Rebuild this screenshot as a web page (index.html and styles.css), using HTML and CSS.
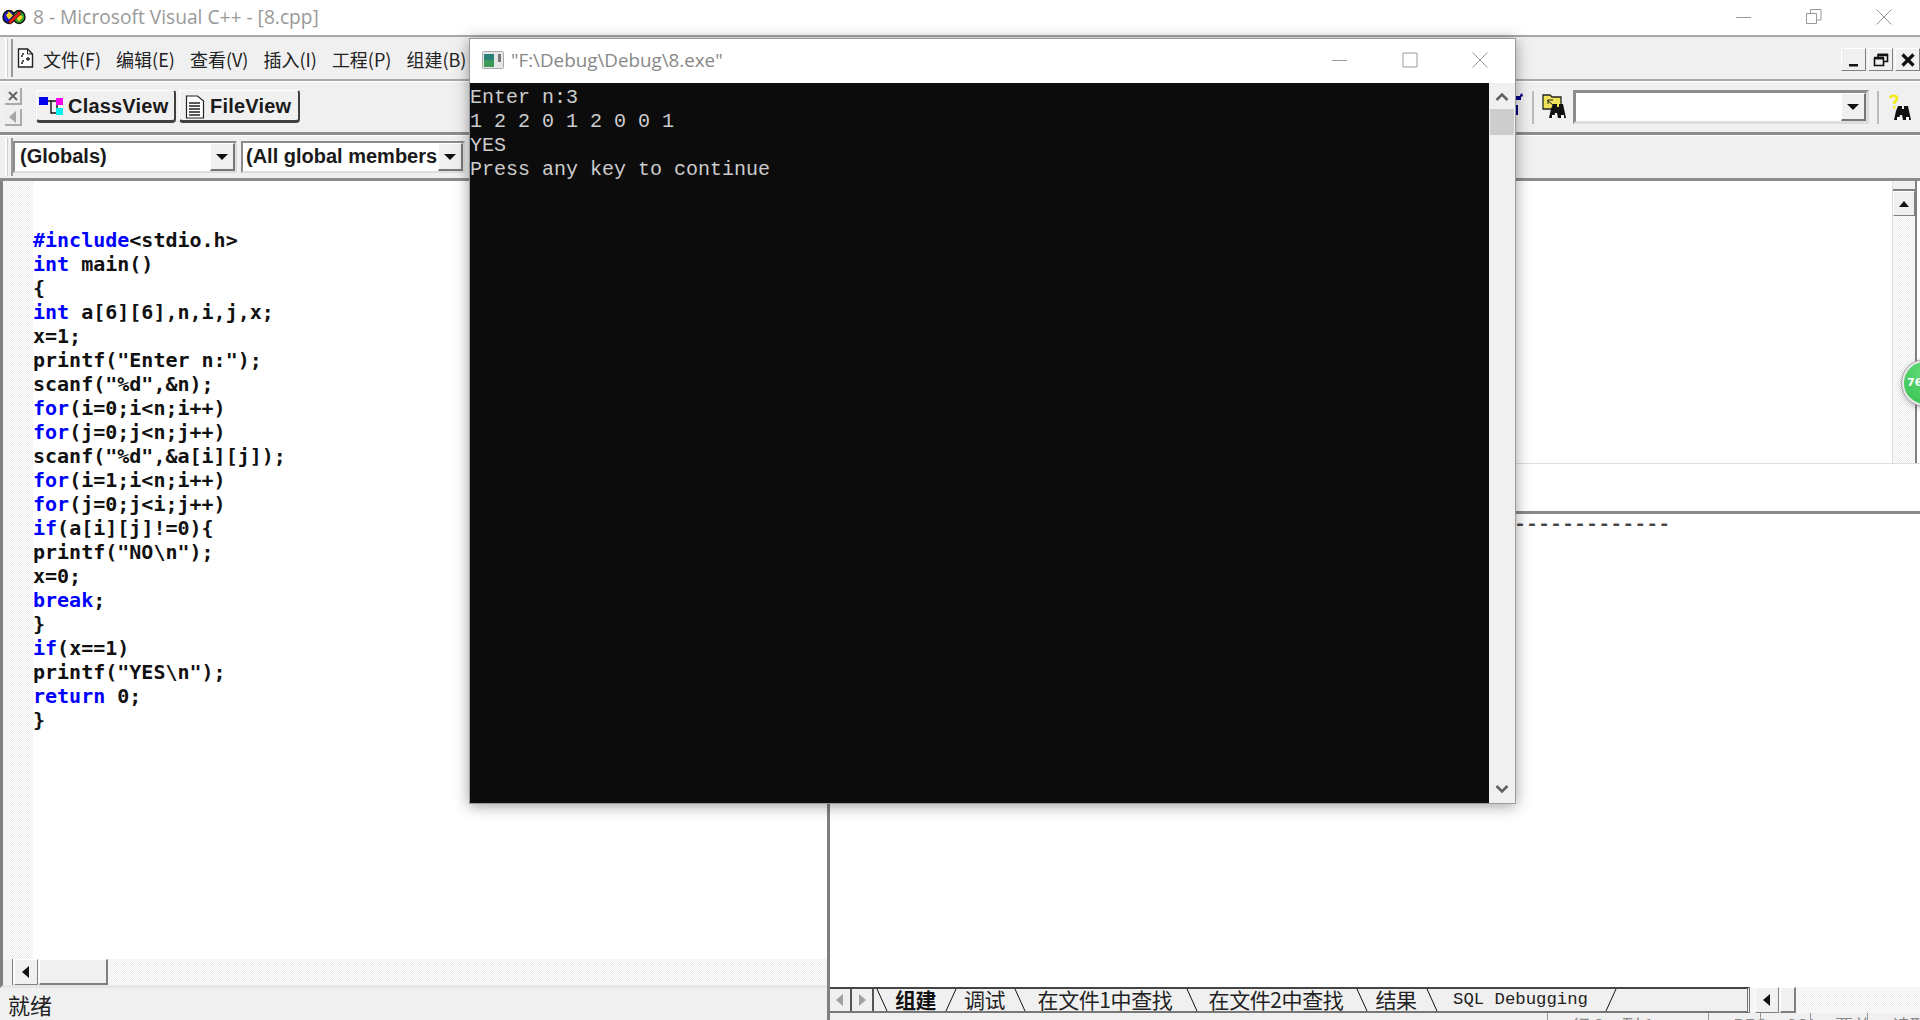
FILE: index.html
```html
<!DOCTYPE html>
<html lang="zh">
<head>
<meta charset="utf-8">
<title>8 - Microsoft Visual C++ - [8.cpp]</title>
<link rel="stylesheet" href="styles.css">
</head>
<body>
<div class="app">
  <header class="titlebar">
    <svg class="logo" width="24" height="16" viewBox="0 0 24 16"><ellipse cx="7" cy="8" rx="6" ry="6.5" fill="#1a1acc" stroke="#111" stroke-width="1.4"/><ellipse cx="17" cy="8" rx="6" ry="6.5" fill="#2fa52f" stroke="#111" stroke-width="1.4"/><path d="M7 2.500l4 4-4 4-3-4z" fill="#f2d41c"/><path d="M17 5l4 3-4 4.500-3-4z" fill="#f2d41c"/><path d="M6 13L17 2l2.500 2.500L8.500 15z" fill="#e0201a" stroke="#111" stroke-width=".6"/></svg>
    <span class="title-text">8 - Microsoft Visual C++ - [8.cpp]</span>
    <div class="winbtns">
      <svg width="16" height="16" viewBox="0 0 16 16"><path d="M0 8.500h15" stroke="#999" fill="none"/></svg>
      <svg width="16" height="16" viewBox="0 0 16 16"><path d="M.5 4.500h10v10H.5zM4.500 4V.5h10.500v10.500H11" stroke="#999" fill="none"/></svg>
      <svg width="16" height="16" viewBox="0 0 16 16"><path d="M.5.5l15 15M15.500.5l-15 15" stroke="#999" fill="none"/></svg>
    </div>
  </header>

  <div class="bar menubar">
    <span class="grip"></span>
    <svg class="docicon" width="17" height="20" viewBox="0 0 17 20"><path d="M1.500 1h9l5 5v13h-14z" fill="#fff" stroke="#222" stroke-width="1.400"/><path d="M10.500 1v5h5" fill="none" stroke="#222"/><path d="M5 6h2M4 8h2M11 9v4M9 11h4M5 13h2M4 15h2" stroke="#222" stroke-width="1.300"/></svg>
    <nav class="menus">
      <span>文件(F)</span><span>编辑(E)</span><span>查看(V)</span><span>插入(I)</span><span>工程(P)</span><span>组建(B)</span>
    </nav>
    <div class="mdi">
      <span class="mdibtn"><svg width="14" height="14" viewBox="0 0 14 14"><path d="M2 11h9v2.500H2z" fill="#111"/></svg></span>
      <span class="mdibtn"><svg width="16" height="16" viewBox="0 0 16 16"><path d="M1.500 6.500h9v7h-9zM5 6V2.500h9.500v7H11" fill="none" stroke="#111" stroke-width="1.600"/><path d="M1 6h10M5 3h10" stroke="#111" stroke-width="2.500"/></svg></span>
      <span class="mdibtn"><svg width="14" height="14" viewBox="0 0 14 14"><path d="M1.500 1.500l11 11M12.500 1.500l-11 11" stroke="#111" stroke-width="3.200"/></svg></span>
    </div>
  </div>

  <div class="bar toolbar">
    <div class="dockctl">
      <span class="dockbtn"><svg width="12" height="12" viewBox="0 0 12 12"><path d="M2 2l8 8M10 2l-8 8" stroke="#666" stroke-width="2"/></svg></span>
      <span class="dockbtn"><svg width="12" height="14" viewBox="0 0 12 14"><path d="M9 1v12L2 7z" fill="#a6a6a6"/></svg></span>
    </div>
    <div class="viewtabs">
      <span class="viewtab">
        <svg width="24" height="24" viewBox="0 0 24 24"><path d="M8 6h12M18 8v10M12 6v12h6" stroke="#111" fill="none" stroke-width="1.400"/><rect x="0" y="2" width="9" height="8" fill="#0000ee"/><rect x="17" y="3" width="7" height="7" fill="#ff00ee"/><rect x="17" y="13" width="7" height="7" fill="#00eeee"/></svg>
        ClassView
      </span>
      <span class="viewtab">
        <svg width="20" height="24" viewBox="0 0 20 24"><path d="M1.500 1h11l6 5v17h-17z" fill="#fff" stroke="#222" stroke-width="1.200"/><path d="M4 8h11M4 11h11M4 14h11M4 17h11M4 20h11" stroke="#222" stroke-width="1.400"/></svg>
        FileView
      </span>
    </div>
    <div class="findtools">
      <svg class="partial" width="8" height="30" viewBox="0 0 8 30"><path d="M0 8h5V5l2-1-1-3-2 2v1H0zM0 13h2v10H0z" fill="#000080"/></svg>
      <span class="sep"></span>
      <svg width="26" height="28" viewBox="0 0 26 28"><path d="M1 2h7l2 2h9v12H1z" fill="#efe25a" stroke="#222" stroke-width="1.300"/><path d="M5 7l6 5M11 7H6v4" stroke="#222" fill="none"/><path d="M9 16l2-5h4v3h2v-3h4l3 14h-8l-1-5h-2l-1 5H7z" fill="#111"/><path d="M10 22h3v3h-3zM19 22h3v3h-3z" fill="#fff"/></svg>
      <div class="findcombo">
        <span class="combo-field"></span>
        <span class="arrowbtn"><i class="caret"></i></span>
      </div>
      <span class="sep"></span>
      <svg width="26" height="28" viewBox="0 0 26 28"><path d="M3 5c1-3 7-3 7 0 0 3-3 3-3 6" fill="none" stroke="#f2ea10" stroke-width="2.500"/><path d="M6 13h2.500v2.500H6z" fill="#f2ea10"/><path d="M9 18l2-5h4v3h2v-3h4l3 14h-8l-1-5h-2l-1 5H7z" fill="#111"/><path d="M10 24h3v3h-3zM19 24h3v3h-3z" fill="#fff"/></svg>
    </div>
  </div>

  <div class="bar classbar">
    <span class="grip"></span>
    <div class="combo scope"><span class="combo-text">(Globals)</span><span class="arrowbtn"><i class="caret"></i></span></div>
    <div class="combo members"><span class="combo-text">(All global members</span><span class="arrowbtn"><i class="caret"></i></span></div>
  </div>

  <main class="workspace">
    <section class="leftcol">
      <div class="editor">
        <div class="gutter"></div>
<pre class="code"><span class="kw">#include</span>&lt;stdio.h&gt;
<span class="kw">int</span> main()
{
<span class="kw">int</span> a[6][6],n,i,j,x;
x=1;
printf("Enter n:");
scanf("%d",&amp;n);
<span class="kw">for</span>(i=0;i&lt;n;i++)
<span class="kw">for</span>(j=0;j&lt;n;j++)
scanf("%d",&amp;a[i][j]);
<span class="kw">for</span>(i=1;i&lt;n;i++)
<span class="kw">for</span>(j=0;j&lt;i;j++)
<span class="kw">if</span>(a[i][j]!=0){
printf("NO\n");
x=0;
<span class="kw">break</span>;
}
<span class="kw">if</span>(x==1)
printf("YES\n");
<span class="kw">return</span> 0;
}</pre>
      </div>
      <div class="hscroll">
        <span class="sbsplit"></span>
        <span class="sbbtn"><svg width="8" height="12" viewBox="0 0 8 12"><path d="M7 0v12L0 6z" fill="#111"/></svg></span>
        <span class="sbthumb"></span>
      </div>
      <footer class="status">就绪</footer>
    </section>

    <section class="rightcol">
      <div class="doc">
        <div class="docblank"></div>
        <div class="vscroll">
          <span class="vtop"></span>
          <span class="vbtn"><svg width="12" height="8" viewBox="0 0 12 8"><path d="M6 1l5 6H1z" fill="#111"/></svg></span>
        </div>
        <div class="docedge"></div>
      </div>
      <div class="output">
        <div class="outhead"></div>
        <pre class="outtext">--------------------Configuration: 8 - Win32 Debug--------------------</pre>
        <div class="tabrow">
          <div class="tabstrip">
            <span class="tabnav"><svg width="10" height="14" viewBox="0 0 10 14"><path d="M8 1v12L1 7z" fill="#a0a0a0"/></svg></span>
            <span class="tabnav"><svg width="10" height="14" viewBox="0 0 10 14"><path d="M2 1v12l7-6z" fill="#a0a0a0"/></svg></span>
            <svg class="slant" width="12" height="22" viewBox="0 0 12 22"><path d="M1 0l10 22" stroke="#111" fill="none"/></svg>
            <span class="tab active t1">组建</span>
            <svg class="slant" width="12" height="22" viewBox="0 0 12 22"><path d="M11 0L1 22" stroke="#111" fill="none"/></svg>
            <span class="tab t1">调试</span>
            <svg class="slant" width="12" height="22" viewBox="0 0 12 22"><path d="M1 0l10 22" stroke="#111" fill="none"/></svg>
            <span class="tab t3">在文件1中查找</span>
            <svg class="slant" width="12" height="22" viewBox="0 0 12 22"><path d="M1 0l10 22" stroke="#111" fill="none"/></svg>
            <span class="tab t3b">在文件2中查找</span>
            <svg class="slant" width="12" height="22" viewBox="0 0 12 22"><path d="M1 0l10 22" stroke="#111" fill="none"/></svg>
            <span class="tab t4">结果</span>
            <svg class="slant" width="12" height="22" viewBox="0 0 12 22"><path d="M1 0l10 22" stroke="#111" fill="none"/></svg>
            <span class="tab sql">SQL Debugging</span>
            <svg class="slant" width="12" height="22" viewBox="0 0 12 22"><path d="M11 0L1 22" stroke="#111" fill="none"/></svg>
          </div>
          <div class="tabscroll">
            <span class="sbbtn"><svg width="8" height="12" viewBox="0 0 8 12"><path d="M7 0v12L0 6z" fill="#111"/></svg></span>
            <span class="sbthumb small"></span>
          </div>
        </div>
        <div class="statusparts">
          <span class="part p1">行 3，列 1</span>
          <span class="part p2">REC</span>
          <span class="part p3">COL</span>
          <span class="part p4">覆盖</span>
          <span class="part p5">读取</span>
        </div>
      </div>
    </section>
  </main>
</div>

<div class="console">
  <div class="con-title">
    <svg width="22" height="18" viewBox="0 0 22 18"><rect x=".5" y=".5" width="21" height="17" rx="1" fill="#e6e6e6" stroke="#aaa"/><rect x="2" y="3" width="10" height="13" fill="#2a7f78"/><rect x="2" y="9" width="10" height="7" fill="#3b9a58"/><rect x="16" y="3" width="3" height="8" fill="#777"/></svg>
    <span class="con-name">"F:\Debug\Debug\8.exe"</span>
    <div class="winbtns con-btns">
      <svg width="16" height="16" viewBox="0 0 16 16"><path d="M0 8.500h15" stroke="#999" fill="none"/></svg>
      <svg width="16" height="16" viewBox="0 0 16 16"><path d="M1 1h14v14H1z" stroke="#999" fill="none"/></svg>
      <svg width="16" height="16" viewBox="0 0 16 16"><path d="M.5.5l15 15M15.500.5l-15 15" stroke="#999" fill="none"/></svg>
    </div>
  </div>
  <div class="con-body">
<pre class="con-text">Enter n:3
1 2 2 0 1 2 0 0 1
YES
Press any key to continue</pre>
    <div class="con-scroll">
      <svg class="chev" width="14" height="10" viewBox="0 0 14 10"><path d="M1.500 8L7 2.500 12.500 8" fill="none" stroke="#606060" stroke-width="2.500"/></svg>
      <span class="con-thumb"></span>
      <svg class="chev down" width="14" height="10" viewBox="0 0 14 10"><path d="M1.500 2L7 7.500 12.500 2" fill="none" stroke="#606060" stroke-width="2.500"/></svg>
    </div>
  </div>
</div>

<div class="ball">76</div>
</body>
</html>
```
FILE: styles.css
```css
* { box-sizing: border-box; }
html, body { margin: 0; height: 100%; overflow: hidden; background: #fff; }
body { position: relative; font-family: "Liberation Sans", "Noto Sans CJK SC", sans-serif; color: #111; }
svg { display: block; flex: none; }

.app { width: 1920px; height: 1020px; display: flex; flex-direction: column; overflow: hidden; }

.titlebar { height: 35px; display: flex; align-items: center; padding: 0 0 2px 2px; background: #fff; flex: none; }
.logo { margin-top: 1px; }
.title-text { margin-left: 7px; font: 19.2px "Open Sans", "Noto Sans", sans-serif; color: #999; }
.winbtns { margin-left: auto; display: flex; gap: 54px; padding-right: 28px; align-items: center; }

.bar { background: #f0f0f0; display: flex; align-items: center; flex: none; border-top: 1px solid #fff; }
.menubar { height: 46px; border-top: 2px solid #a8a8a8; border-bottom: 2px solid #a8a8a8; padding-left: 5px; }
.toolbar { height: 54px; border-bottom: 3px solid #8c8c8c; padding-left: 5px; }
.classbar { height: 46px; padding-left: 5px; border-bottom: 3px solid #8c8c8c; }

.grip { width: 8px; height: 38px; border-left: 2px solid #fff; border-right: 2px solid #999; background: #f0f0f0; box-shadow: inset 1px 0 0 #ccc; flex: none; }
.docicon { margin-left: 4px; }
.menus { display: flex; margin: 1px 0 0 9px; gap: 15px; font: 18px "Noto Sans CJK SC", sans-serif; color: #222; }
.menus span { white-space: nowrap; }
.mdi { margin: 3px 0 0 auto; display: flex; gap: 2px; }
.mdibtn { width: 25px; height: 23px; display: flex; align-items: center; justify-content: center; background: #f0f0f0; border: 1px solid; border-color: #fff #808080 #808080 #fff; }

.dockctl { display: flex; flex-direction: column; gap: 4px; width: 17px; }
.dockbtn { height: 17px; display: flex; align-items: center; justify-content: center; border-bottom: 2px solid #aaa; border-right: 2px solid #aaa; background: #eee; }
.viewtabs { display: flex; margin: 8px 0 0 14px; gap: 3px; align-self: flex-start; }
.viewtab { height: 33px; display: flex; align-items: center; gap: 5px; padding: 2px 8px 0 3px; font-weight: 700; font-size: 20px; letter-spacing: .2px; color: #1a1a1a; background: #f0f0f0; border: 1px solid; border-color: #fff #404040 #404040 #fff; border-width: 1px 2px 3px 1px; border-radius: 0 3px 4px 4px; }
.viewtab:nth-child(1) { width: 140px; padding-left: 2px; }
.viewtab:nth-child(2) { width: 121px; padding-left: 5px; }

.findtools { margin-left: auto; display: flex; align-items: center; gap: 8px; padding-right: 7px; }
.sep { width: 2px; height: 33px; background: #bbb; }
.findcombo { width: 296px; height: 34px; display: flex; background: #fff; border: 3px solid #8c8c8c; border-right-color: #ddd; border-bottom-color: #ddd; margin-left: -3px; }
.combo-field { flex: 1; }
.arrowbtn { width: 25px; display: flex; align-items: center; justify-content: center; background: #f0f0f0; border: 1px solid; border-color: #fff #777 #777 #fff; border-width: 1px 2px 2px 1px; flex: none; }
.caret { width: 0; height: 0; border-left: 6px solid transparent; border-right: 6px solid transparent; border-top: 6px solid #111; }

.combo { height: 32px; display: flex; background: #fff; border: 2px solid #8c8c8c; border-right-color: #ddd; border-bottom-color: #ddd; }
.scope { width: 224px; }
.members { width: 224px; margin-left: 4px; }
.combo-text { flex: 1; font-weight: 700; font-size: 20px; line-height: 26px; padding-left: 5px; white-space: nowrap; overflow: hidden; color: #1a1a1a; }
.members .combo-text { padding-left: 3px; }

.workspace { flex: 1; display: grid; grid-template-columns: 827px 1fr; grid-template-rows: minmax(0, 1fr); min-height: 0; }
.leftcol { display: flex; flex-direction: column; min-height: 0; }
.editor { flex: 1; display: flex; border-left: 3px solid #808080; background: #fff; min-height: 0; overflow: hidden; }
.gutter { width: 30px; background: repeating-conic-gradient(#ececec 0 25%, #fff 0 50%) 0 0 / 2px 2px; flex: none; }
.code { margin: 0; padding: 47px 0 0; font: 700 20px/24px "DejaVu Sans Mono", monospace; color: #111; }
.kw { color: #0000ff; }

.hscroll { height: 29px; display: flex; border-left: 3px solid #808080; background: repeating-conic-gradient(#ececec 0 25%, #fff 0 50%) 0 0 / 2px 2px; border-bottom: 3px solid #e6e6e6; flex: none; }
.sbsplit { width: 10px; background: #f0f0f0; border-right: 1px solid #808080; }
.sbbtn { width: 24px; display: flex; align-items: center; justify-content: center; background: #f0f0f0; border: 1px solid; border-color: #fff #808080 #808080 #fff; flex: none; margin-left: 1px; }
.sbthumb { width: 69px; background: #f0f0f0; border: 1px solid; border-color: #fff #808080 #808080 #fff; border-width: 1px 2px 2px 1px; margin-left: 1px; }
.sbthumb.small { width: 16px; }
.status { height: 32px; flex: none; background: #f0f0f0; padding-left: 8px; font: 22px/32px "Noto Sans CJK SC", sans-serif; color: #222; }

.rightcol { display: flex; flex-direction: column; min-width: 0; min-height: 0; }
.doc { height: 283px; display: flex; flex: none; background: #fff; border-bottom: 1px solid #ddd; }
.docblank { flex: 1; }
.vscroll { width: 23px; display: flex; flex-direction: column; background: repeating-conic-gradient(#ececec 0 25%, #fff 0 50%) 0 0 / 2px 2px; border-left: 1px solid #ddd; }
.vtop { height: 10px; background: #f0f0f0; border-bottom: 2px solid #808080; }
.vbtn { height: 25px; display: flex; align-items: center; justify-content: center; background: #f0f0f0; border: 1px solid; border-color: #fff #808080 #808080 #fff; }
.docedge { width: 5px; border-left: 2px solid #808080; background: #fff; }

.output { flex: 1; display: flex; flex-direction: column; border-left: 3px solid #808080; min-height: 0; background: #fff; }
.outhead { height: 50px; border-bottom: 3px solid #8a8a8a; flex: none; }
.outtext { flex: 1; margin: 0; font: 700 20px/22px "Liberation Mono", monospace; color: #444; overflow: hidden; }
.tabrow { height: 26px; display: flex; background: repeating-conic-gradient(#ececec 0 25%, #fff 0 50%) 0 0 / 2px 2px; flex: none; }
.tabstrip { width: 920px; display: flex; align-items: center; background: #f0f0f0; border-top: 2px solid #444; border-bottom: 2px solid #777; border-right: 3px double #777; flex: none; }
.tabnav { width: 22px; height: 22px; display: flex; align-items: center; justify-content: center; border-right: 2px solid #555; flex: none; }
.slant { margin-left: 2px; }
.tab { font: 21px/20px "Noto Sans CJK SC", sans-serif; letter-spacing: -.4px; color: #222; white-space: nowrap; text-align: center; flex: none; margin-top: -3px; }
.tab.active { font-weight: 700; color: #111; }
.t1 { width: 55px; }
.t3 { width: 158px; }
.t3b { width: 156px; }
.t4 { width: 56px; }
.tab.sql { width: 165px; font: 17.3px/20px "Liberation Mono", monospace; letter-spacing: 0; margin-top: -1px; }
.tabscroll { margin-left: 5px; display: flex; }
.tabscroll .sbbtn { margin-left: 0; }
.statusparts { height: 7px; flex: none; display: flex; overflow: hidden; background: #f0f0f0; font: 18px/24px "Noto Sans CJK SC", sans-serif; color: #888; }
.part { height: 7px; border-left: 1px solid #999; padding-left: 24px; white-space: nowrap; flex: none; }
.p1 { margin-left: 717px; width: 161px; }
.p2 { width: 52px; }
.p3 { width: 50px; }
.p4 { width: 57px; }
.p5 { width: 50px; }

.console { position: absolute; left: 469px; top: 38px; width: 1047px; height: 766px; display: flex; flex-direction: column; background: #fff; border: 1px solid #9a9a9a; box-shadow: 0 2px 14px rgba(0,0,0,.38); }
.con-title { height: 44px; display: flex; align-items: center; padding: 0 0 3px 12px; flex: none; }
.con-name { margin-left: 7px; font: 18.8px "Open Sans", "Noto Sans", sans-serif; color: #888; }
.con-btns { gap: 54px; padding-right: 27px; }
.con-body { flex: 1; display: flex; min-height: 0; }
.con-text { flex: 1; margin: 0; padding-top: 3px; background: #0c0c0c; color: #cccccc; font: 20px/24px "Liberation Mono", monospace; }
.con-scroll { width: 26px; background: #f0f0f0; display: flex; flex-direction: column; align-items: center; padding-top: 9px; }
.con-thumb { width: 24px; height: 26px; background: #cdcdcd; margin-top: 7px; }
.chev.down { margin-top: auto; margin-bottom: 9px; }

.ball { position: absolute; left: 1902px; top: 360px; width: 46px; height: 46px; border-radius: 50%; background: radial-gradient(circle at 50% 25%, #62dc78, #35c050); border: 2px solid #e8e8e8; outline: 1px solid #aaa; box-shadow: 0 2px 6px rgba(0,0,0,.3); color: #fff; font: 700 11px/42px "DejaVu Sans", sans-serif; padding-left: 3px; }
```
